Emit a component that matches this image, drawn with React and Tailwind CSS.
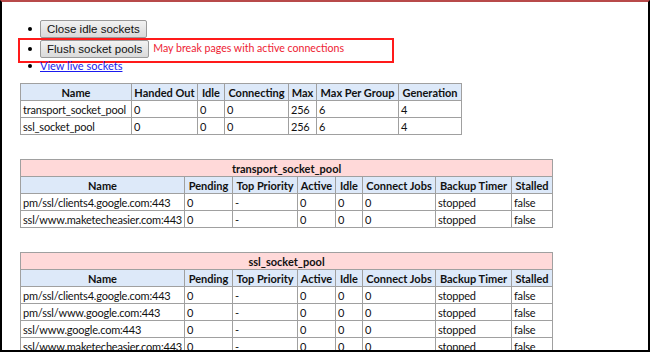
import React from "react";

const poolRows = [
  ["transport_socket_pool", "0", "0", "0", "256", "6", "4"],
  ["ssl_socket_pool", "0", "0", "0", "256", "6", "4"],
];

const transportGroups = [
  "pm/ssl/clients4.google.com:443",
  "ssl/www.maketecheasier.com:443",
];

const sslGroups = [
  "pm/ssl/clients4.google.com:443",
  "pm/ssl/www.google.com:443",
  "ssl/www.google.com:443",
  "ssl/www.maketecheasier.com:443",
];

const td = "border border-[#a0a0a0] px-[2px] h-[17px] leading-[15px] text-left whitespace-nowrap overflow-hidden tracking-[-0.2px]";
const th = "border border-[#a0a0a0] px-[2px] h-[17px] leading-[15px] bg-[#dde9f9] font-bold text-center whitespace-nowrap overflow-hidden";

const poolCols = [
  ["Name", 111],
  ["Handed Out", 66],
  ["Idle", 27],
  ["Connecting", 64],
  ["Max", 28],
  ["Max Per Group", 82],
  ["Generation", 63],
];

const groupCols = [
  ["Name", 164],
  ["Pending", 48],
  ["Top Priority", 65],
  ["Active", 38],
  ["Idle", 27],
  ["Connect Jobs", 73],
  ["Backup Timer", 76],
  ["Stalled", 41],
];

const GroupTable = ({ title, groups }) => (
  <table className="border-collapse table-fixed w-[532px] mb-[24px]">
    <colgroup>
      {groupCols.map(([label, w]) => (
        <col key={label} style={{ width: w }} />
      ))}
    </colgroup>
    <thead>
      <tr>
        <th colSpan={8} className={th + " !bg-[#ffd9d9]"}>
          {title}
        </th>
      </tr>
      <tr>
        {groupCols.map(([label]) => (
          <th key={label} className={th}>
            {label}
          </th>
        ))}
      </tr>
    </thead>
    <tbody>
      {groups.map((g) => (
        <tr key={g}>
          <td className={td}>{g}</td>
          <td className={td}>0</td>
          <td className={td}>-</td>
          <td className={td}>0</td>
          <td className={td}>0</td>
          <td className={td}>0</td>
          <td className={td}>stopped</td>
          <td className={td}>false</td>
        </tr>
      ))}
    </tbody>
  </table>
);

const Bullet = ({ top }) => (
  <span
    className={"absolute left-[-12px] w-[4px] h-[4px] rounded-full bg-black " + top}
  />
);

const btn =
  "h-[18px] px-[6px] border border-[#9a9a9a] rounded-[2px] bg-gradient-to-b from-[#f2f2f2] to-[#dadada] text-[11.5px] leading-[16px] text-[#111]";

const App = () => {
  return (
    <div
      className="w-[650px] h-[352px] overflow-hidden bg-white border-l-2 border-r-2 border-b-2 border-black border-t-2 border-t-[#b84a4a] text-[11px] text-[#111]"
      style={{ fontFamily: 'Lato, "Open Sans", sans-serif' }}
    >
      <ul className="pl-[38px] pt-[17px] mb-[10px]">
        <li className="h-[20px] flex items-center relative">
          <Bullet top="top-[8px]" />
          <button className={btn} style={{ fontFamily: '"Liberation Sans", Arial, sans-serif' }}>
            Close idle sockets
          </button>
        </li>
        <li className="h-[20px] flex items-center relative">
          <Bullet top="top-[8px]" />
          <span className="absolute left-[-22px] top-[-1px] w-[376px] h-[25px] border-2 border-[#ff1a1a]" />
          <button className={btn} style={{ fontFamily: '"Liberation Sans", Arial, sans-serif' }}>
            Flush socket pools
          </button>
          <span className="ml-[4px] text-[#ee2233] text-[10.6px]">
            May break pages with active connections
          </span>
        </li>
        <li className="h-[14px] flex items-center relative">
          <Bullet top="top-[5px]" />
          <a href="#" className="text-[#1a1aee] underline leading-[14px]">
            View live sockets
          </a>
        </li>
      </ul>

      <div className="pl-[18px]">
        <table className="border-collapse table-fixed w-[441px] mb-[24px]">
          <colgroup>
            {poolCols.map(([label, w]) => (
              <col key={label} style={{ width: w }} />
            ))}
          </colgroup>
          <thead>
            <tr>
              {poolCols.map(([label]) => (
                <th key={label} className={th}>
                  {label}
                </th>
              ))}
            </tr>
          </thead>
          <tbody>
            {poolRows.map((r) => (
              <tr key={r[0]}>
                {r.map((c, i) => (
                  <td key={i} className={td}>
                    {c}
                  </td>
                ))}
              </tr>
            ))}
          </tbody>
        </table>

        <GroupTable title="transport_socket_pool" groups={transportGroups} />
        <GroupTable title="ssl_socket_pool" groups={sslGroups} />
      </div>
    </div>
  );
};

export default App;
